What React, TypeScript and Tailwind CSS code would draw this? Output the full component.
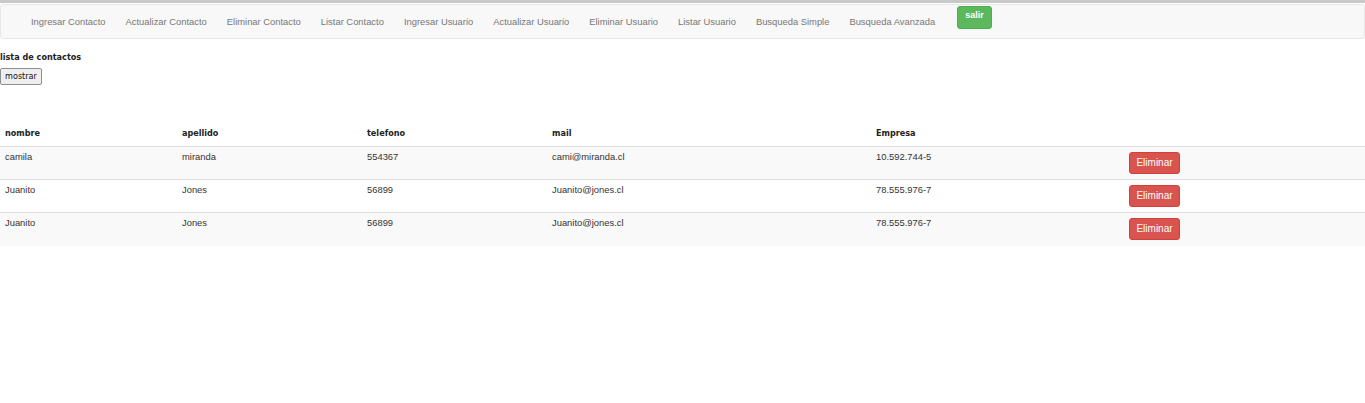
const links = [
  'Ingresar Contacto',
  'Actualizar Contacto',
  'Eliminar Contacto',
  'Listar Contacto',
  'Ingresar Usuario',
  'Actualizar Usuario',
  'Eliminar Usuario',
  'Listar Usuario',
  'Busqueda Simple',
  'Busqueda Avanzada',
];

const contactos = [
  { nombre: 'camila', apellido: 'miranda', telefono: '554367', mail: 'cami@miranda.cl', empresa: '10.592.744-5' },
  { nombre: 'Juanito', apellido: 'Jones', telefono: '56899', mail: 'Juanito@jones.cl', empresa: '78.555.976-7' },
  { nombre: 'Juanito', apellido: 'Jones', telefono: '56899', mail: 'Juanito@jones.cl', empresa: '78.555.976-7' },
];

const th = "text-left px-[5px] pt-[4px] pb-[6px] leading-[14px] font-['DejaVu_Sans_Condensed','DejaVu_Sans',Verdana,sans-serif] font-bold text-[9px] text-[#222]";
const td = 'align-top px-[5px] pt-[3px] leading-[14px]';

export default function App() {
  return (
    <div className="w-[1365px] h-[403px] bg-white text-[#333] font-['Liberation_Sans',Arial,sans-serif] text-[9.4px]">
      <div className="h-[3px] bg-[#c9c9c9]" />
      <nav className="mt-px h-[35px] bg-[#f8f8f8] border border-[#e7e7e7] rounded-[3px] flex items-center pl-[20px]">
        <ul className="flex items-center">
          {links.map((l) => (
            <li key={l}>
              <a className="px-[10px] text-[#777] leading-[34px]">{l}</a>
            </li>
          ))}
          <li className="ml-[12px] self-start mt-px">
            <button className="h-[23px] px-[7px] bg-[#5cb85c] border border-[#4cae4c] rounded-[3px] text-white font-bold text-[9px] leading-none pb-[3px]">
              salir
            </button>
          </li>
        </ul>
      </nav>

      <div className="mt-[11px] leading-[14px] font-['DejaVu_Sans_Condensed','DejaVu_Sans',Verdana,sans-serif] font-bold text-[9px] text-[#222]">
        lista de contactos
      </div>
      <button className="block mt-[4px] h-[17px] w-[42px] bg-[#efefef] border border-[#8f8f8f] rounded-[2px] text-[9px] text-[#111] leading-none font-['DejaVu_Sans_Condensed','DejaVu_Sans',Verdana,sans-serif]">
        mostrar
      </button>

      <table className="mt-[37px] w-full table-fixed border-collapse">
        <thead>
          <tr className="border-b border-[#ddd]">
            <th className={`w-[177px] ${th}`}>nombre</th>
            <th className={`w-[185px] ${th}`}>apellido</th>
            <th className={`w-[185px] ${th}`}>telefono</th>
            <th className={`w-[324px] ${th}`}>mail</th>
            <th className={`w-[253px] ${th}`}>Empresa</th>
            <th className={th} />
          </tr>
        </thead>
        <tbody>
          {contactos.map((c, i) => (
            <tr key={i} className={`border-t border-[#ddd] ${i % 2 === 0 ? 'bg-[#f9f9f9]' : 'bg-white'}`}>
              <td className={`${td} h-[33px]`}>{c.nombre}</td>
              <td className={td}>{c.apellido}</td>
              <td className={td}>{c.telefono}</td>
              <td className={td}>{c.mail}</td>
              <td className={td}>{c.empresa}</td>
              <td className="align-top px-[5px] pt-[5px]">
                <button className="block h-[22px] w-[51px] bg-[#d9534f] border border-[#d43f3a] rounded-[3px] text-white text-[10px] leading-none">
                  Eliminar
                </button>
              </td>
            </tr>
          ))}
        </tbody>
      </table>
    </div>
  );
}
